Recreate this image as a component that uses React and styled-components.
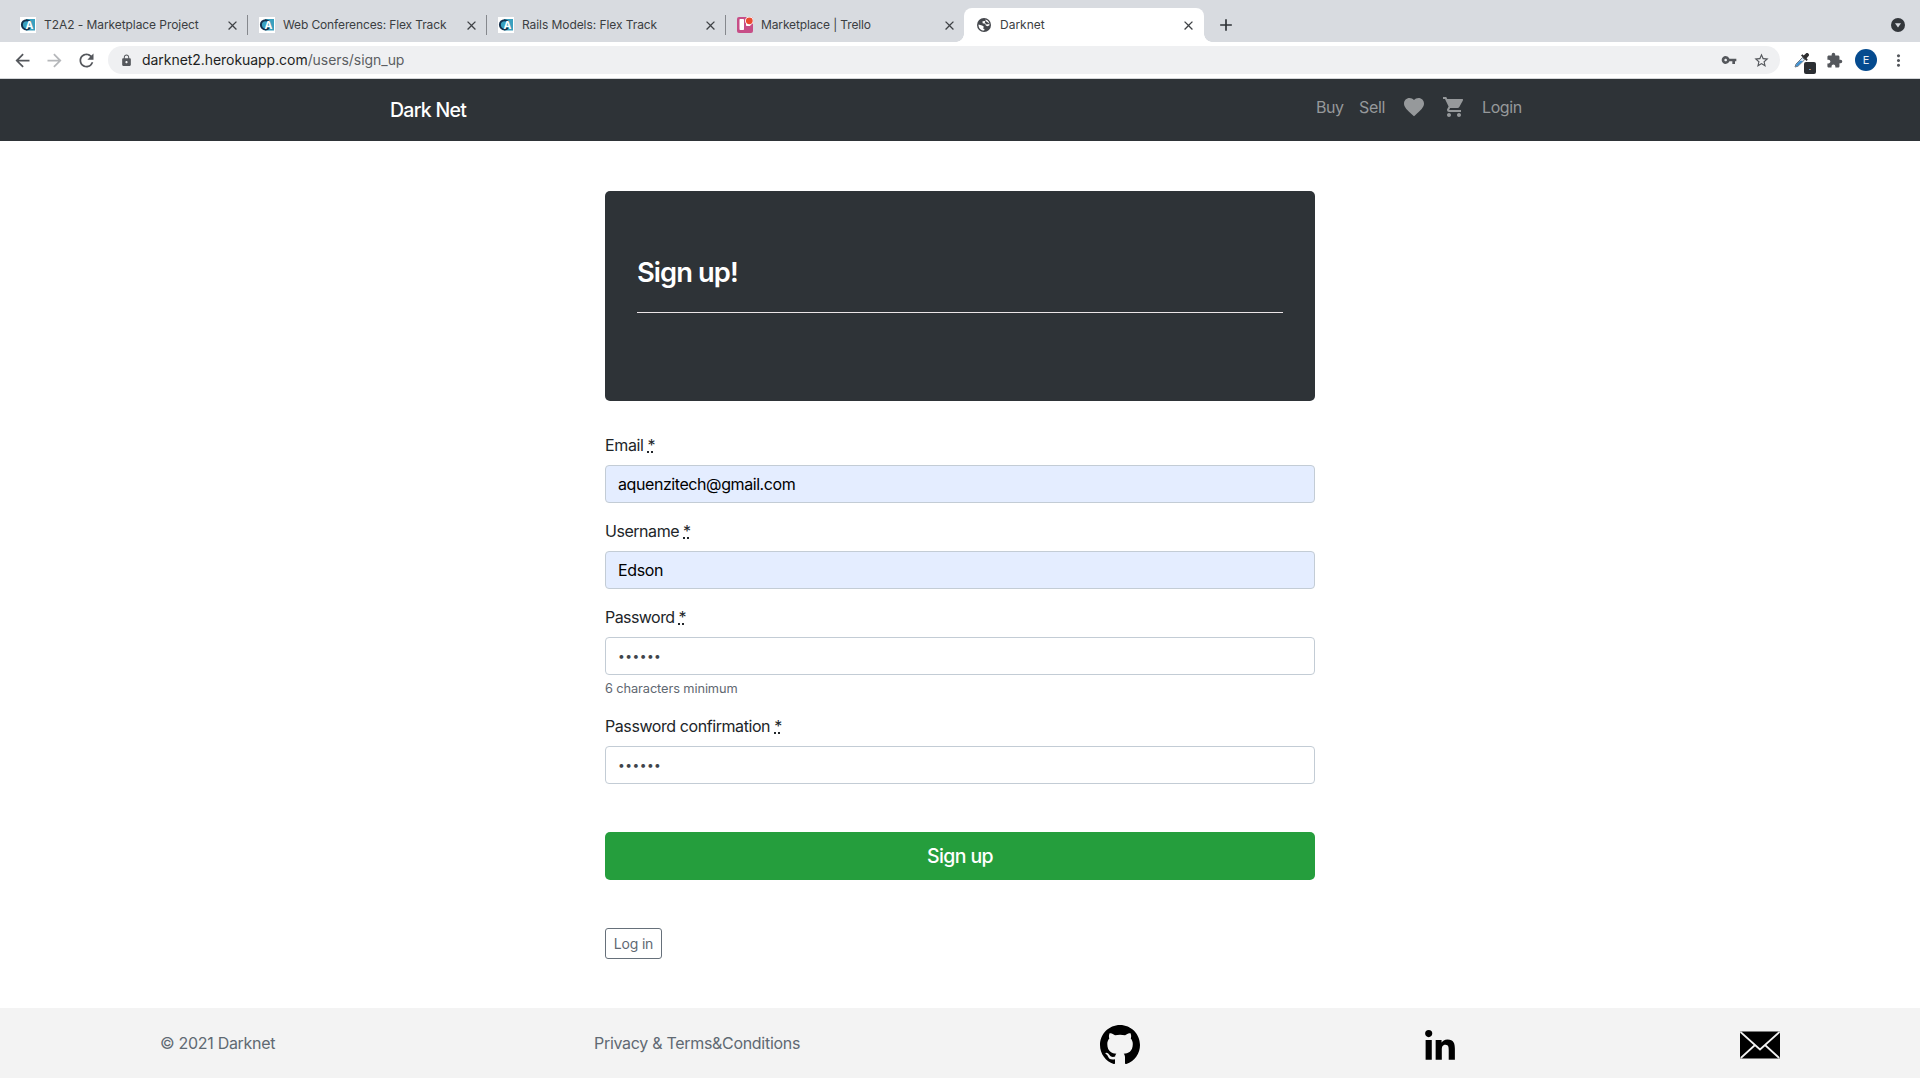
import React from "react";
import styled, { createGlobalStyle, css } from "styled-components";
import {
  MdArrowBack, MdArrowForward, MdRefresh, MdLock, MdVpnKey, MdStarBorder,
  MdExtension, MdMoreVert, MdFavorite, MdShoppingCart, MdClose, MdAdd,
} from "react-icons/md";
import { BsGithub } from "react-icons/bs";
import { FaLinkedinIn } from "react-icons/fa";

const GlobalStyle = createGlobalStyle`
  *, *::before, *::after { box-sizing: border-box; }
  body {
    margin: 0;
    background: #fff;
    color: #212529;
    font-family: Inter, "Liberation Sans", sans-serif;
    font-size: 16px;
    line-height: 24px;
    overflow: hidden;
  }
  svg { display: block; flex: none; }
`;

const Text = styled.span`
  letter-spacing: ${(p) => p.$track || 0}px;
  white-space: nowrap;
`;

/* Browser chrome */
const TabStrip = styled.div`
  display: flex;
  height: 42px;
  padding: 8px 15px 0 9px;
  background: #d8dbe0;
`;
const TabBox = styled.div`
  position: relative;
  display: flex;
  align-items: center;
  width: ${(p) => (p.$active ? 240 : p.$beforeActive ? 238 : 239)}px;
  height: 34px;
  padding: 0 ${(p) => (p.$beforeActive ? 7 : 8)}px 0 11px;
  font-size: 12px;
  color: #3b3e42;
  ${(p) => p.$active && css`
    background: #fff;
    border-radius: 8px 8px 0 0;
    padding-left: 13px;
    &::before, &::after {
      content: "";
      position: absolute;
      bottom: 0;
      width: 8px;
      height: 8px;
    }
    &::before { left: -8px; background: radial-gradient(circle at 0 0, transparent 7.5px, #fff 8px); }
    &::after { right: -8px; background: radial-gradient(circle at 100% 0, transparent 7.5px, #fff 8px); }
  `}
`;
const TabTitle = styled(Text)`
  flex: 1;
  margin-left: ${(p) => (p.$active ? 9 : 8)}px;
`;
const TabDivider = styled.span`
  width: 1px;
  height: 20px;
  margin: 0 -8px 0 7px;
  background: #85888d;
`;
const NewTab = styled.span`
  display: flex;
  align-items: center;
  margin-left: 12px;
  flex: 1;
  color: #2e3236;
`;
const TabSearch = styled.span`
  display: flex;
  align-items: center;
`;

const Toolbar = styled.div`
  display: flex;
  align-items: center;
  height: 37px;
  padding: 0 11px 0 11.5px;
  background: #fff;
  border-bottom: 1px solid #d3d5d8;
  color: #54575c;
`;
const NavIcons = styled.div`
  display: flex;
  gap: 11px;
  width: 96.5px;
`;
const Omnibox = styled.div`
  display: flex;
  align-items: center;
  width: 1672px;
  height: 28px;
  padding: 0 10px 0 12px;
  border-radius: 14px;
  background: #eff0f2;
  font-size: 14px;
`;
const Url = styled(Text)`
  flex: 1;
  margin-left: 9px;
  color: #5b5e62;
  b { font-weight: 400; color: #1d1f22; }
`;
const OmniIcons = styled.div`
  display: flex;
  align-items: center;
  gap: 16px;
`;
const Extensions = styled.div`
  display: flex;
  align-items: center;
  flex: 1;
  padding-left: 13px;
`;
const Dropper = styled.div`
  position: relative;
  width: 18px;
  height: 18px;
  margin-right: 15px;
`;
const Badge = styled.span`
  position: absolute;
  left: 11px;
  top: 11px;
  width: 12px;
  height: 12px;
  border-radius: 2px;
  background: #2b2e32;
  color: #fff;
  font-size: 8px;
  line-height: 10px;
  text-align: center;
`;
const Avatar = styled.span`
  width: 22px;
  height: 22px;
  margin: 0 12px;
  border-radius: 50%;
  background: #054b8f;
  color: #e8eef5;
  font-size: 11px;
  line-height: 22px;
  text-align: center;
`;

/* Site */
const Navbar = styled.nav`
  display: flex;
  justify-content: center;
  height: 62px;
  background: #2e3337;
`;
const NavInner = styled.div`
  display: flex;
  justify-content: space-between;
  align-items: center;
  width: 1140px;
  padding-right: 8px;
`;
const Brand = styled(Text)`
  font-size: 19.5px;
  font-weight: 500;
  color: #fff;
`;
const NavLinks = styled.div`
  display: flex;
  align-items: center;
  gap: 16px;
  padding-bottom: 6px;
  color: #96999b;
`;
const NavLink = styled(Text)`
  width: ${(p) => p.$w}px;
`;

const Main = styled.main`
  display: flex;
  flex-direction: column;
  width: 710px;
  height: 867px;
  margin: 0 auto;
  padding-top: 50px;
`;
const Jumbotron = styled.section`
  height: 210px;
  padding: 65px 32px 0;
  border-radius: 5px;
  background: #2e3337;
  margin-bottom: 32px;
`;
const Heading = styled.h2`
  margin: 0;
  font-size: 27.3px;
  line-height: 34px;
  font-weight: 600;
  letter-spacing: -0.9px;
  color: #fff;
`;
const Rule = styled.hr`
  height: 1px;
  margin: 22px 0 0;
  border: 0;
  background: #ebe5e7;
`;
const Group = styled.div`
  display: flex;
  flex-direction: column;
  margin-bottom: 16px;
`;
const Label = styled.label`
  margin-bottom: 8px;
  height: 24px;
`;
const Abbr = styled.abbr`
  display: inline-block;
  margin-left: 4px;
  text-decoration: underline dotted;
  text-decoration-thickness: 2px;
  text-underline-offset: 0;
  text-decoration-skip-ink: none;
`;
const Field = styled.div`
  display: flex;
  align-items: center;
  height: 38px;
  padding: 0 12px;
  border: 1px solid #c3ccd5;
  border-radius: 4px;
  background: ${(p) => (p.$filled ? "#e4edff" : "#fff")};
  color: #000;
`;
const Dots = styled.span`
  padding-bottom: 1px;
  font-size: 12px;
  letter-spacing: 0.47px;
  color: #3f454b;
`;
const Hint = styled.small`
  height: 19px;
  margin-top: 4px;
  font-size: 12.8px;
  line-height: 19px;
  letter-spacing: -0.1px;
  color: #5f6871;
`;
const Submit = styled.button`
  height: 48px;
  margin: 32px 0 48px;
  padding: 0;
  border: 0;
  border-radius: 5px;
  background: #259e3d;
  color: #fff;
  font: 500 19.5px/30px Inter, "Liberation Sans", sans-serif;
  letter-spacing: -0.65px;
`;
const LoginButton = styled.button`
  align-self: flex-start;
  width: 57px;
  height: 31px;
  padding: 0;
  border: 1px solid #66707a;
  border-radius: 3px;
  background: #fff;
  color: #5f6973;
  font: 400 14px/21px Inter, "Liberation Sans", sans-serif;
  letter-spacing: -0.18px;
`;

const Footer = styled.footer`
  display: grid;
  grid-template-columns: 434px 506px 320px 320px 40px;
  align-items: center;
  height: 70px;
  padding-left: 160px;
  background: #f3f3f3;
  color: #606972;
`;
const FooterIcon = styled.span`
  display: flex;
  align-items: center;
  justify-content: center;
  width: 40px;
  height: 40px;
  margin-top: ${(p) => p.$drop || 4}px;
  color: #000;
`;

const AcademyIcon = () => (
  <svg width="16" height="16" viewBox="0 0 16 16">
    <rect width="16" height="16" fill="#fff" />
    <rect x="6" y="2" width="9" height="11.5" fill="#3aa0bf" />
    <circle cx="6.5" cy="7.8" r="4.6" fill="#3aa0bf" stroke="#15304d" strokeWidth="2" strokeDasharray="22 7" strokeDashoffset="-3.5" />
    <text x="5.6" y="12" fontFamily="Inter, sans-serif" fontSize="10.5" fontWeight="700" fill="#fff">A</text>
  </svg>
);
const TrelloIcon = () => (
  <svg width="16" height="16" viewBox="0 0 16 16">
    <rect width="16" height="16" rx="2" fill="#c74e87" />
    <rect x="2.5" y="2" width="4.5" height="11" rx="0.8" fill="#fff" />
    <rect x="9" y="2" width="4.5" height="7" rx="0.8" fill="#fff" />
    <circle cx="12.3" cy="3.8" r="4.3" fill="#fff" />
    <circle cx="12.3" cy="3.8" r="3.4" fill="#ea4b30" />
  </svg>
);
const GlobeIcon = () => (
  <svg width="14" height="14" viewBox="0 0 14 14">
    <circle cx="7" cy="7" r="7" fill="#44474c" />
    <path d="M8.600 1.600L8 3 5.500 3.300 5.600 5.200 8.300 5.800 8.800 7.600 10.600 8.300 12.500 7.200C12.600 4.500 11 2.300 8.600 1.600z" fill="#fff" />
    <path d="M8.700 1.800l.8 1.900 1.900 1.100.9 1.200-2.800.400-1.700-1.600z" fill="#44474c" />
    <path d="M1.500 6.400L5.200 7.500 6.900 8.800 6 10.400 7.500 10.900 7.200 12.500C4 12.600 1.300 10 1.500 6.400z" fill="#fff" />
  </svg>
);
const DropperIcon = () => (
  <svg width="18" height="18" viewBox="0 0 18 18">
    <path d="M2 16l1-3 6.500-6.500 2.200 2.200L5 15.200z" fill="#d5e6f2" stroke="#6f7780" strokeWidth="1" />
    <path d="M2.500 15.500l1-2.500 3.500-3.200 3 .2L5 14.700z" fill="#3d8fd0" />
    <path d="M8 4.500l5.500 5.500 1.300-1.300-1.200-1.400 2-2.200c1.500-1.700-1-4.200-2.700-2.700l-2.200 2-1.300-1.200z" fill="#2f2f31" />
  </svg>
);
const TabSearchIcon = () => (
  <svg width="14" height="14" viewBox="0 0 14 14">
    <circle cx="7" cy="7" r="7" fill="#33373b" />
    <path d="M4 5.200h6L7 9.500z" fill="#d8dbe0" />
  </svg>
);
const MailIcon = () => (
  <svg width="40" height="28" viewBox="0 0 40 28">
    <rect x="0" y="0.500" width="40" height="27" rx="1" fill="#000" />
    <path d="M0.500 1L20 18.500 39.500 1M0.800 27L15 14M39.200 27L25 14" fill="none" stroke="#f2f2f2" strokeWidth="1.700" />
  </svg>
);

const tabs = [
  { title: "T2A2 - Marketplace Project", Icon: AcademyIcon, track: -0.07 },
  { title: "Web Conferences: Flex Track", Icon: AcademyIcon, track: -0.13 },
  { title: "Rails Models: Flex Track", Icon: AcademyIcon, track: -0.07 },
  { title: "Marketplace | Trello", Icon: TrelloIcon, track: -0.13, beforeActive: true },
  { title: "Darknet", Icon: GlobeIcon, track: 0, active: true },
];

const fields = [
  { label: "Email", track: -0.37, value: "aquenzitech@gmail.com", valueTrack: -0.42 },
  { label: "Username", track: -0.46, value: "Edson", valueTrack: -0.37 },
  { label: "Password", track: -0.56, hint: "6 characters minimum" },
  { label: "Password confirmation", track: -0.42 },
];

export default function App() {
  return (
    <>
      <GlobalStyle />
      <TabStrip>
        {tabs.map(({ title, Icon, track, active, beforeActive }) => (
          <TabBox key={title} $active={active} $beforeActive={beforeActive}>
            <Icon />
            <TabTitle $track={track} $active={active}>{title}</TabTitle>
            <MdClose size={15} color="#3f4246" />
            {!active && !beforeActive && <TabDivider />}
          </TabBox>
        ))}
        <NewTab><MdAdd size={20} /></NewTab>
        <TabSearch><TabSearchIcon /></TabSearch>
      </TabStrip>
      <Toolbar>
        <NavIcons>
          <MdArrowBack size={21} />
          <MdArrowForward size={21} color="#b5b7ba" />
          <MdRefresh size={21} />
        </NavIcons>
        <Omnibox>
          <MdLock size={13} />
          <Url $track={-0.05}><b>darknet2.herokuapp.com</b>/users/sign_up</Url>
          <OmniIcons>
            <MdVpnKey size={16} />
            <MdStarBorder size={17} />
          </OmniIcons>
        </Omnibox>
        <Extensions>
          <Dropper>
            <DropperIcon />
            <Badge>.</Badge>
          </Dropper>
          <MdExtension size={17} />
          <Avatar>E</Avatar>
          <MdMoreVert size={19} />
        </Extensions>
      </Toolbar>

      <Navbar>
        <NavInner>
          <Brand $track={-0.71}>Dark Net</Brand>
          <NavLinks>
            <NavLink $w={27} $track={-0.5}>Buy</NavLink>
            <NavLink $w={27} $track={-0.3}>Sell</NavLink>
            <MdFavorite size={24} />
            <MdShoppingCart size={24} />
            <NavLink $w={40} $track={-0.4}>Login</NavLink>
          </NavLinks>
        </NavInner>
      </Navbar>

      <Main>
        <Jumbotron>
          <Heading>Sign up!</Heading>
          <Rule />
        </Jumbotron>
        {fields.map((f) => (
          <Group key={f.label}>
            <Label>
              <Text $track={f.track}>{f.label}</Text>
              <Abbr>*</Abbr>
            </Label>
            <Field $filled={!!f.value}>
              {f.value ? <Text $track={f.valueTrack}>{f.value}</Text> : <Dots>••••••</Dots>}
            </Field>
            {f.hint && <Hint>{f.hint}</Hint>}
          </Group>
        ))}
        <Submit>Sign up</Submit>
        <LoginButton>Log in</LoginButton>
      </Main>

      <Footer>
        <Text $track={-0.3}>© 2021 Darknet</Text>
        <Text $track={-0.3}>Privacy &amp; Terms&amp;Conditions</Text>
        <FooterIcon><BsGithub size={40} /></FooterIcon>
        <FooterIcon $drop={7}><FaLinkedinIn size={34} /></FooterIcon>
        <FooterIcon $drop={4}><MailIcon /></FooterIcon>
      </Footer>
    </>
  );
}
